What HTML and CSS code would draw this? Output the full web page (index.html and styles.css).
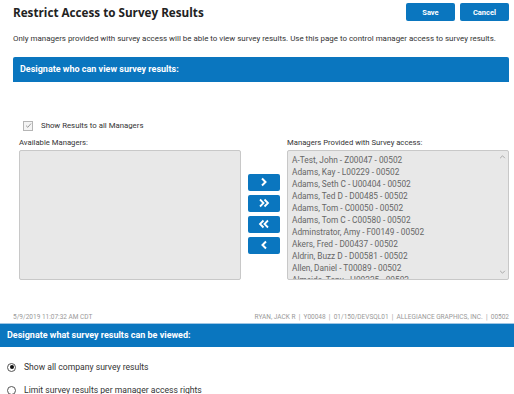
FILE: index.html
```html
<!DOCTYPE html>
<html lang="en">
<head>
  <meta charset="UTF-8" />
  <meta name="viewport" content="width=device-width, initial-scale=1.0" />
  <title>Restrict Access to Survey Results</title>
  <link rel="stylesheet" href="styles.css">
</head>
<body>
  <div class="top">
    <div class="header">
      <h1>Restrict Access to Survey Results</h1>
      <div class="actions">
        <button class="btn">Save</button>
        <button class="btn">Cancel</button>
      </div>
    </div>
    <p class="intro">Only managers provided with survey access will be able to view survey results. Use this page to control manager access to survey results.</p>

    <div class="banner">Designate who can view survey results:</div>

    <label class="check-row">
      <span class="checkbox">
        <svg viewBox="0 0 10 10" width="7" height="7"><path d="M1.5 5.2 L4 7.6 L8.6 2.2" fill="none" stroke="#8a8a8a" stroke-width="1.2"/></svg>
      </span>
      Show Results to all Managers
    </label>

    <div class="lists">
      <div class="list-col">
        <div class="list-label">Available Managers:</div>
        <div class="listbox"></div>
      </div>
      <div class="movers">
        <button class="mover"><svg viewBox="0 0 12 10" width="12" height="10"><path d="M4 1.5 L7.5 5 L4 8.5" fill="none" stroke="white" stroke-width="2"/></svg></button>
        <button class="mover"><svg viewBox="0 0 12 10" width="12" height="10"><path d="M2 1.5 L5.5 5 L2 8.5 M6.5 1.5 L10 5 L6.5 8.5" fill="none" stroke="white" stroke-width="1.8"/></svg></button>
        <button class="mover"><svg viewBox="0 0 12 10" width="12" height="10"><path d="M5.5 1.5 L2 5 L5.5 8.5 M10 1.5 L6.5 5 L10 8.5" fill="none" stroke="white" stroke-width="1.8"/></svg></button>
        <button class="mover"><svg viewBox="0 0 12 10" width="12" height="10"><path d="M8 1.5 L4.5 5 L8 8.5" fill="none" stroke="white" stroke-width="2"/></svg></button>
      </div>
      <div class="list-col">
        <div class="list-label">Managers Provided with Survey access:</div>
        <div class="listbox">
          <ul class="items">
            <li>A-Test, John - Z00047 - 00502</li>
            <li>Adams, Kay - L00229 - 00502</li>
            <li>Adams, Seth C - U00404 - 00502</li>
            <li>Adams, Ted D - D00485 - 00502</li>
            <li>Adams, Tom - C00050 - 00502</li>
            <li>Adams, Tom C - C00580 - 00502</li>
            <li>Adminstrator, Amy - F00149 - 00502</li>
            <li>Akers, Fred - D00437 - 00502</li>
            <li>Aldrin, Buzz D - D00581 - 00502</li>
            <li>Allen, Daniel - T00089 - 00502</li>
            <li>Almeida, Tony - H00225 - 00502</li>
          </ul>
          <div class="scroll">
            <svg viewBox="0 0 8 5" width="7" height="4"><path d="M1 4 L4 1 L7 4" fill="none" stroke="#999" stroke-width="1"/></svg>
            <svg viewBox="0 0 8 5" width="7" height="4"><path d="M1 1 L4 4 L7 1" fill="none" stroke="#999" stroke-width="1"/></svg>
          </div>
        </div>
      </div>
    </div>

    <div class="footer">
      <span>5/9/2019 11:07:32 AM CDT</span>
      <span>RYAN, JACK R &nbsp;|&nbsp; Y00048 &nbsp;|&nbsp; 01/150/DEVSQL01 &nbsp;|&nbsp; ALLEGIANCE GRAPHICS, INC. &nbsp;|&nbsp; 00502</span>
    </div>
  </div>

  <div class="banner wide">Designate what survey results can be viewed:</div>
  <div class="options">
    <label class="radio-row"><span class="radio on"></span>Show all company survey results</label>
    <label class="radio-row"><span class="radio"></span>Limit survey results per manager access rights</label>
  </div>
</body>
</html>
```

FILE: styles.css
```css
body {
  margin: 0;
  font-family: Roboto, 'Liberation Sans', sans-serif;
  color: #333;
  background: white;
  overflow: hidden;
}
.top {
  margin: 0 5px 0 13px;
}
.header {
  display: flex;
  justify-content: space-between;
  align-items: center;
  padding-top: 3px;
  height: 18px;
}
h1 {
  margin: 0;
  font-family: 'Open Sans', sans-serif;
  font-size: 11.7px;
  font-weight: 700;
  color: #222;
}
.actions {
  display: flex;
  gap: 5px;
}
.btn {
  width: 49px;
  height: 18px;
  border: 0;
  border-radius: 2px;
  background-color: #0a76bf;
  color: white;
  font-family: Roboto, sans-serif;
  font-size: 7.5px;
  font-weight: 700;
  padding: 0;
}
.intro {
  margin: 13px 0 0;
  font-size: 7.95px;
  line-height: 10px;
  white-space: nowrap;
}
.banner {
  margin-top: 13px;
  height: 25px;
  line-height: 25px;
  padding-left: 7px;
  background-color: #0a76bf;
  color: white;
  font-size: 9px;
  font-weight: 700;
  border-radius: 2px 2px 0 0;
}
.check-row {
  display: flex;
  align-items: center;
  gap: 8px;
  margin: 39px 0 0 10px;
  font-size: 7.8px;
  height: 9px;
}
.checkbox {
  width: 8px;
  height: 8px;
  border: 1px solid #b5b5b5;
  background: #f4f4f4;
  display: flex;
  align-items: center;
  justify-content: center;
}
.lists {
  display: flex;
  align-items: center;
  gap: 7px;
  margin: 7px 0 0 6px;
}
.list-col {
  width: 222px;
}
.list-label {
  font-size: 7.7px;
  height: 13px;
  line-height: 12px;
}
.listbox {
  box-sizing: border-box;
  height: 130px;
  background-color: #e8e8e8;
  border: 1px solid #c8c8c8;
  border-radius: 2px;
  display: flex;
  overflow: hidden;
}
.items {
  list-style: none;
  margin: 0;
  padding: 3px 0 0 4px;
  flex: 1;
  font-size: 8.3px;
  color: #666;
}
.items li {
  height: 12px;
  line-height: 12px;
  white-space: nowrap;
}
.scroll {
  width: 12px;
  display: flex;
  flex-direction: column;
  justify-content: space-between;
  align-items: center;
  padding: 4px 0 5px;
}
.movers {
  display: flex;
  flex-direction: column;
  gap: 4px;
  padding-top: 10px;
}
.mover {
  width: 32px;
  height: 17px;
  border: 0;
  border-radius: 2px;
  background-color: #0a76bf;
  padding: 0;
  display: flex;
  align-items: center;
  justify-content: center;
}
.footer {
  display: flex;
  justify-content: space-between;
  margin-top: 33px;
  font-size: 6.5px;
  color: #999;
  height: 10px;
}
.banner.wide {
  margin-top: 0;
  border-radius: 0;
  border-top: 1px solid #9fc6e4;
  height: 23px;
  line-height: 23px;
}
.options {
  padding: 15px 0 0 7px;
  border-bottom: 1px solid #ddd;
}
.radio-row {
  display: flex;
  align-items: center;
  gap: 8px;
  font-size: 8.6px;
  height: 10px;
  margin-bottom: 13px;
}
.radio-row:last-child {
  margin-bottom: 1px;
}
.radio {
  box-sizing: border-box;
  width: 9px;
  height: 9px;
  border: 1px solid #555;
  border-radius: 50%;
  display: flex;
  align-items: center;
  justify-content: center;
}
.radio.on::after {
  content: '';
  width: 4px;
  height: 4px;
  border-radius: 50%;
  background: #111;
}
```
